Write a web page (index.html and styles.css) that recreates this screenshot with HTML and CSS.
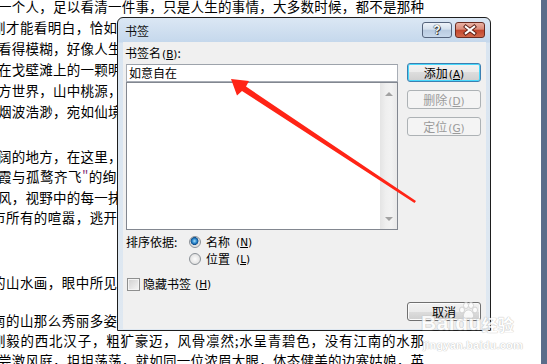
FILE: index.html
```html
<!DOCTYPE html>
<html lang="zh-CN">
<head>
    <meta charset="UTF-8">
    <title>书签</title>
    <link rel="stylesheet" href="styles.css">
</head>
<body>
    <div class="page">
        <div class="doc">
            <p class="para p1">
                <span class="ln">一个人，足以看清一件事，只是人生的事情，大多数时候，都不是那种</span>
                <span class="ln cut">刚才能看明白，恰如我们站在山脚下仰望高峰，总以为自己看清了全貌</span>
                <span class="ln">看得模糊，好像人生的风景，只有走过了才知道其中的滋味，回头再看</span>
                <span class="ln">在戈壁滩上的一颗明珠，静静地躺在那里，看尽了世间的沧桑与变迁，</span>
                <span class="ln">方世界，山中桃源，溪水潺潺，鸟语花香，仿佛远离了人间一切纷扰，</span>
                <span class="ln">烟波浩渺，宛如仙境，让人流连忘返，不忍离去，只想在此静静地停留</span>
            </p>
            <p class="para p2">
                <span class="ln">阔的地方，在这里，天高地远，云卷云舒，看那落日余晖，感受那份宁</span>
                <span class="ln">霞与孤鹜齐飞<span class="q">"</span>的绚烂，秋水共长天一色的壮美，令人心旷神怡，久久</span>
                <span class="ln">风，视野中的每一抹色彩都那么浓烈，每一寸土地都那么辽阔，让人忘</span>
                <span class="ln cut">市所有的喧嚣，逃开了生活的琐碎，独自一人静静地享受这份难得的安</span>
            </p>
            <p class="para p3">
                <span class="ln cut">的山水画，眼中所见皆是美景，心中所感皆是欢喜，我曾一直以为，江</span>
            </p>
            <p class="para p4">
                <span class="ln cut">南的山那么秀丽多姿，水那么温柔婉约，而这里的山却更像是一位性格</span>
                <span class="ln cut">刚毅的西北汉子，粗犷豪迈，风骨凛然;水呈青碧色，没有江南的水那</span>
                <span class="ln">尝激风庭，坦坦荡荡，就如同一位浓眉大眼，体态健美的边塞姑娘，英</span>
            </p>
        </div>
    </div>
    <div class="edge"></div>

    <div class="dialog">
        <div class="titlebar">
            <span class="title">书签</span>
            <div class="caption">
                <span class="cap help">?</span>
                <span class="cap close">
                    <svg width="30" height="16" viewBox="0 0 30 16">
                        <path d="M10.5 4.5 L19.5 11.5 M19.5 4.5 L10.5 11.5" stroke="#5a1e14" stroke-width="4.2" stroke-linecap="square" fill="none"/>
                        <path d="M10.5 4.5 L19.5 11.5 M19.5 4.5 L10.5 11.5" stroke="#fff" stroke-width="2.2" stroke-linecap="square" fill="none"/>
                    </svg>
                </span>
            </div>
        </div>
        <div class="client">
            <div class="left">
                <div class="label">书签名<span class="acc">(<u>B</u>)</span>:</div>
                <div class="textbox">如意自在</div>
                <div class="listbox">
                    <div class="scrollbar">
                        <span class="arr up"></span>
                        <span class="arr down"></span>
                    </div>
                </div>
                <div class="sort">
                    <span class="sort-label">排序依据:</span>
                    <div class="radios">
                        <div class="radio on"><span class="dot"></span>名称<span class="acc">(<u>N</u>)</span></div>
                        <div class="radio"><span class="dot"></span>位置<span class="acc">(<u>L</u>)</span></div>
                    </div>
                </div>
                <div class="check"><span class="box"></span>隐藏书签<span class="acc">(<u>H</u>)</span></div>
            </div>
            <div class="right">
                <div class="btn default">添加<span class="acc">(<u>A</u>)</span></div>
                <div class="btn disabled">删除<span class="acc">(<u>D</u>)</span></div>
                <div class="btn disabled">定位<span class="acc">(<u>G</u>)</span></div>
                <div class="btn cancel">取消</div>
            </div>
        </div>
    </div>

    <svg class="arrow" width="547" height="364" viewBox="0 0 547 364">
        <polygon points="231,79 249,81 246,86.5 416,201 414.5,203 242,91 237,95.5" fill="#ff2416"/>
    </svg>

    <div class="wm">
        <div class="wm-top">
            <span class="wm-bai">Baidu</span>
            <svg class="paw" width="20" height="18" viewBox="0 0 20 18">
                <g fill="#fff" stroke="#cfcfcf" stroke-width="1">
                    <ellipse cx="4" cy="8" rx="2.5" ry="3"/>
                    <ellipse cx="8" cy="3.5" rx="2.5" ry="3"/>
                    <ellipse cx="13" cy="3.5" rx="2.5" ry="3"/>
                    <ellipse cx="17" cy="8" rx="2.5" ry="3"/>
                    <path d="M10.5 8 C7 8 5 12 5.5 14.5 C6 17 9 16 10.5 16 C12 16 15 17 15.5 14.5 C16 12 14 8 10.5 8 Z"/>
                </g>
            </svg>
            <span class="wm-jy">经验</span>
        </div>
        <div class="wm-url">jingyan.baidu.com</div>
    </div>
</body>
</html>
```

FILE: styles.css
```css
* { box-sizing: border-box; }
body { margin: 0; width: 547px; height: 364px; overflow: hidden; background: #fff; display: flex; font-family: "Noto Sans CJK SC", sans-serif; color: #000; }

.page { flex: 1; overflow: hidden; }
.edge { width: 6px; background: #5b6c8a; }

.doc { width: 426px; margin: -4px 0 0 -2px; font-size: 13.5px; }
.para { margin: 0; }
.ln { display: block; text-align: justify; text-align-last: justify; }
.ln.cut { text-indent: -6px; }
.q { color: #8a3a7a; }
.p1 { line-height: 21px; }
.p2 { line-height: 20.3px; margin-top: 24px; }
.p3 { line-height: 21px; margin-top: 45px; }
.p4 { line-height: 20px; margin-top: 17px; }

/* dialog window */
.dialog { position: absolute; left: 117px; top: 17px; width: 374px; height: 314px; border: 1px solid #1e1e1e; border-radius: 6px 6px 0 0; background: linear-gradient(#dbe7f4, #c5d8ec 24px, #d9e5f1 25px, #dfe8f1); padding: 0 4px 1px 5px; display: flex; flex-direction: column; font-size: 12px; }
.titlebar { height: 24px; display: flex; align-items: flex-start; flex-shrink: 0; }
.title { margin: 6px 0 0 2px; line-height: 14px; color: #111; }
.caption { margin: 4px 1px 0 auto; display: flex; gap: 3px; }
.cap { width: 30px; height: 16px; border-radius: 3px; display: flex; align-items: center; justify-content: center; }
.help { border: 1px solid #55647c; background: linear-gradient(#eef3f9, #d4e0ed 45%, #b9cbe0 50%, #c8d9ec); color: #fff; font: bold 12px "Liberation Sans", sans-serif; text-shadow: 0 0 1px #222, 0 0 1px #222, 1px 1px 0 #444; }
.close { border: 1px solid #6a2b20; background: linear-gradient(#eab2a4, #d98a78 45%, #c2452c 50%, #d2694c); }

.acc { font-family: "DejaVu Sans", sans-serif; font-size: 10.5px; margin-left: 1px; }

.client { flex: 1; background: #f0f0f0; display: flex; gap: 9px; padding: 4px 5px 8px 3px; }
.left { width: 272px; display: flex; flex-direction: column; }
.label { line-height: 14px; margin-left: -1px; }
.textbox { margin-top: 3px; height: 18px; border: 1px solid #a9aeb6; border-top-color: #9da3ab; background: #fff; padding-left: 2px; line-height: 16px; }
.listbox { height: 148px; border: 1px solid #828790; background: #fff; display: flex; justify-content: flex-end; }
.scrollbar { width: 17px; background: linear-gradient(to right, #e4e4e4, #efefef 35%, #f2f2f2 65%, #e9e9e9); display: flex; flex-direction: column; align-items: center; justify-content: space-between; padding: 9px 0 8px; }
.arr { width: 0; height: 0; border-left: 4px solid transparent; border-right: 4px solid transparent; }
.arr.up { border-bottom: 4px solid #a2a2a2; }
.arr.down { border-top: 4px solid #a2a2a2; }

.sort { margin-top: 4px; display: flex; }
.sort-label { width: 63px; line-height: 16px; }
.radios { display: flex; flex-direction: column; gap: 1px; }
.radio { display: flex; align-items: center; gap: 5px; line-height: 16px; height: 16px; }
.dot { width: 12px; height: 12px; border-radius: 50%; border: 1px solid #8b9197; background: radial-gradient(circle, #fdfdfd 0, #e6e6e6 60%, #d2d2d2 100%); }
.radio.on .dot { background: radial-gradient(circle at 45% 40%, #a8e0fb 0, #2a86cc 28%, #0e4e8c 45%, #dcdcdc 52%, #f6f6f6 100%); }
.check { margin-top: 9px; display: flex; align-items: center; gap: 3px; height: 16px; line-height: 16px; margin-left: 1px; }
.box { width: 13px; height: 13px; border: 1px solid #8e8f8f; background: linear-gradient(135deg, #cfcfcf, #f7f7f7); box-shadow: inset 0 0 0 1px #f4f4f4; }

.right { width: 74px; display: flex; flex-direction: column; gap: 8px; }
.btn { height: 19px; border: 1px solid #707070; border-radius: 3px; background: linear-gradient(#f2f2f2, #ebebeb 50%, #dddddd 50%, #cfcfcf); box-shadow: inset 0 0 0 1px #fbfbfb; text-align: center; line-height: 17px; }
.btn.default { margin-top: 17px; border-color: #3c7fb1; box-shadow: inset 0 0 0 1px #48d8fb; }
.btn.disabled { border-color: #adb2b5; background: #f4f4f4; box-shadow: none; color: #9a9a9a; }
.btn.cancel { margin-top: auto; }

.arrow { position: absolute; left: 0; top: 0; pointer-events: none; }

/* watermark */
.wm { position: absolute; left: 421px; top: 310px; color: #fff; font-family: "Liberation Sans", sans-serif; font-weight: bold; text-shadow: 0 0 1px #b4b4b4, 0 0 1px #b4b4b4; opacity: 0.85; pointer-events: none; }
.wm-top { display: flex; align-items: flex-end; position: relative; }
.wm-bai { font-size: 21px; line-height: 26px; letter-spacing: 0.5px; }
.paw { position: absolute; left: 37px; top: -8px; }
.wm-jy { font-family: "Noto Sans CJK SC", sans-serif; font-size: 16px; line-height: 24px; }
.wm-url { font-size: 11px; line-height: 14px; margin: 2px 0 0 2px; letter-spacing: 0.2px; }
```
